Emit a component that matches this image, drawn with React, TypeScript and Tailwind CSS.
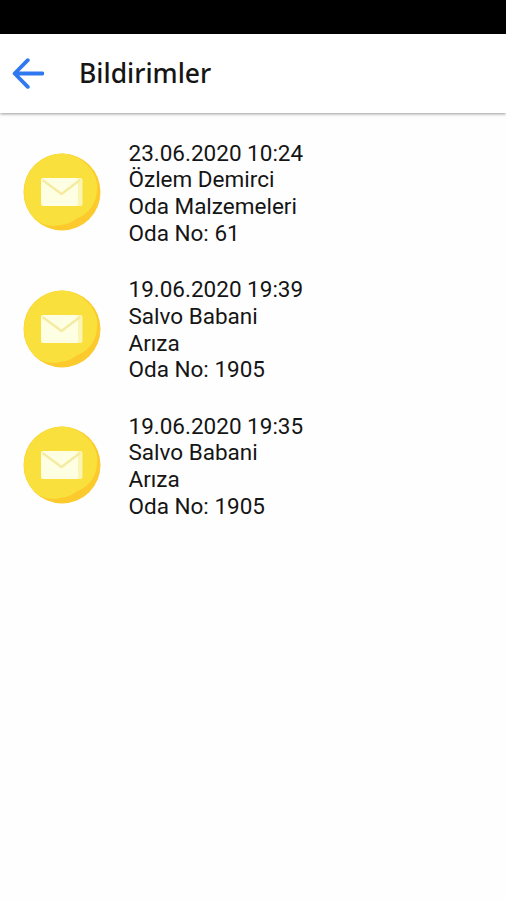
type Notification = {
  date: string;
  name: string;
  subject: string;
  room: string;
};

const notifications: Notification[] = [
  {
    date: "23.06.2020 10:24",
    name: "Özlem Demirci",
    subject: "Oda Malzemeleri",
    room: "61",
  },
  {
    date: "19.06.2020 19:39",
    name: "Salvo Babani",
    subject: "Arıza",
    room: "1905",
  },
  {
    date: "19.06.2020 19:35",
    name: "Salvo Babani",
    subject: "Arıza",
    room: "1905",
  },
];

function BackIcon() {
  return (
    <svg
      className="size-8"
      viewBox="0 0 32 32"
      fill="none"
      stroke="#2f78f0"
      strokeWidth="3.8"
      strokeLinecap="round"
      strokeLinejoin="round"
    >
      <path d="M15.800 2.200 2.600 15.500 15.800 28.800M3 15.500H30.500" />
    </svg>
  );
}

function MailIcon() {
  return (
    <svg className="size-[78px] shrink-0" viewBox="0 0 78 78">
      <circle cx="39" cy="39" r="38.500" fill="#fcca2c" />
      <path
        d="M39 .5C53 .5 62 9 68 16 73 23 75 30 74 38 73 50 67 59 57 64 50 67 50 69 43 71 31 74 20 74 12 66A38.500 38.500 0 0 1 39 .5Z"
        fill="#f9e03c"
      />
      <rect x="44" y="25" width="15.500" height="28" rx="2" fill="#fbf5b4" />
      <rect x="18" y="25" width="37" height="28" rx="2" fill="#fefee2" />
      <path
        d="M19.500 27 38.500 41 57 27"
        fill="none"
        stroke="#f5eba0"
        strokeWidth="2.200"
        strokeLinejoin="round"
      />
    </svg>
  );
}

export default function App() {
  return (
    <div className="h-[900px] bg-[#fefefe] font-[Roboto,sans-serif] text-[#151515]">
      <div className="h-[34px] bg-black" />
      {/* Header */}
      <header className="flex h-[79px] items-center gap-[35px] bg-white pl-3 shadow-[0_1px_3px_rgba(0,0,0,0.4)]">
        <button aria-label="Geri">
          <BackIcon />
        </button>
        <h1 className="pt-px font-['Noto_Sans',sans-serif] text-[26.500px] font-medium">
          Bildirimler
        </h1>
      </header>
      {/* Notifications */}
      <ul className="flex flex-col gap-[29.500px] pt-[26.500px] pl-[22.500px]">
        {notifications.map((item) => (
          <li key={item.date} className="flex items-center gap-7">
            <div className="-mt-[2px]">
              <MailIcon />
            </div>
            <div className="text-[22.500px] leading-[26.750px]">
              <p>{item.date}</p>
              <p>{item.name}</p>
              <p>{item.subject}</p>
              <p>Oda No: {item.room}</p>
            </div>
          </li>
        ))}
      </ul>
    </div>
  );
}
